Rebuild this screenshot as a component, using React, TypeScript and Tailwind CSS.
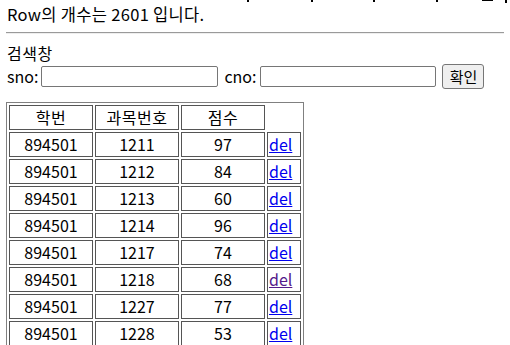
import React from "react";

const rows = [
  ["894501", "1211", "97", false],
  ["894501", "1212", "84", false],
  ["894501", "1213", "60", false],
  ["894501", "1214", "96", false],
  ["894501", "1217", "74", false],
  ["894501", "1218", "68", true],
  ["894501", "1227", "77", false],
  ["894501", "1228", "53", false],
  ["894501", "1229", "88", false],
] as const;

export default function App() {
  return (
    <div className="w-[510px] h-[345px] overflow-hidden bg-white text-black font-['Noto_Sans_CJK_KR','Noto_Sans',sans-serif] text-[16px]">
      {/* clipped previous line fragments */}
      <div className="h-[3px] flex items-start">
        <span className="ml-[247px] w-[2px] h-[2px] bg-black" />
        <span className="ml-[62px] w-[2px] h-[2px] bg-black" />
        <span className="ml-[60px] w-[2px] h-[2px] bg-black" />
        <span className="ml-[61px] w-[2px] h-[2px] bg-black" />
        <span className="ml-[44px] w-[11px] h-[1px] bg-black" />
        <span className="ml-[12px] w-[2px] h-[3px] bg-black" />
      </div>
      <div className="px-[7px]">
        <div className="leading-[22px] text-[16.5px] tracking-[0.3px]">Row의 개수는 2601 입니다.</div>
        <div className="mt-[7px] h-[2px] border-t border-t-[#9a9a9a] border-b border-b-[#eeeeee] -mx-[1px]" />
        <div className="mt-[9px] leading-[20px] tracking-[0.5px]">검색창</div>
        <div className="flex items-center h-[24px] mt-[1px]">
          <span>sno:</span>
          <input className="ml-[3px] w-[177px] h-[21px] border border-[#767676] rounded-[2px] bg-white outline-none" />
          <span className="ml-[6px]">cno:</span>
          <input className="ml-[4px] w-[176px] h-[21px] border border-[#767676] rounded-[2px] bg-white outline-none" />
          <button className="ml-[6px] w-[42px] h-[25px] border border-[#767676] rounded-[3px] bg-[#efefef] text-[15px] leading-none">
            확인
          </button>
        </div>
        <table className="mt-[14px] -ml-[1px] border border-[#808080] border-separate border-spacing-[2px] text-[16px]">
          <tbody>
            <tr>
              {["학번", "과목번호", "점수"].map((h) => (
                <td key={h} className="border border-[#555] w-[84px] h-[25px] p-0 text-center leading-[21px] tracking-[0.5px]">
                  {h}
                </td>
              ))}
              <td className="w-[34px] p-0" />
            </tr>
            {rows.map(([a, b, c, visited]) => (
              <tr key={b}>
                <td className="border border-[#555] w-[84px] h-[25px] p-0 text-center leading-[21px]">{a}</td>
                <td className="border border-[#555] w-[84px] h-[25px] p-0 text-center leading-[21px]">{b}</td>
                <td className="border border-[#555] w-[84px] h-[25px] p-0 text-center leading-[21px]">{c}</td>
                <td className="border border-[#555] w-[34px] h-[25px] p-0 pl-[1px] text-left leading-[21px]">
                  <a href="#" className={visited ? "underline text-[#551a8b]" : "underline text-[#0000ee]"}>
                    del
                  </a>
                </td>
              </tr>
            ))}
          </tbody>
        </table>
      </div>
    </div>
  );
}
